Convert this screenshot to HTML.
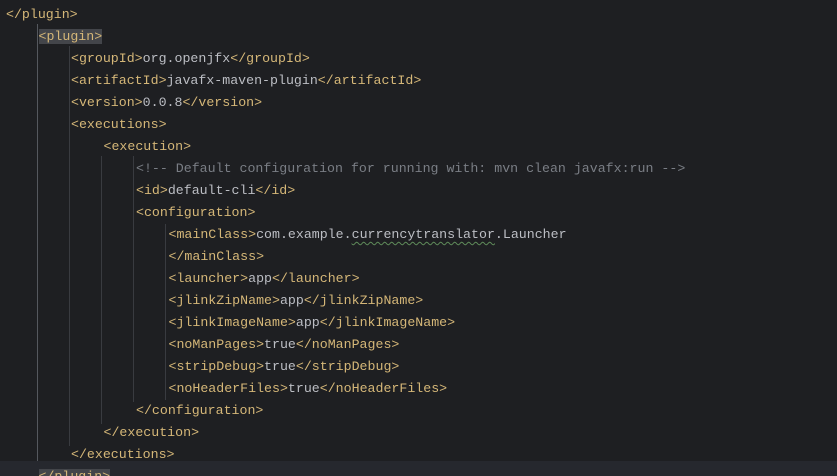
<!DOCTYPE html>
<html><head><style>
html,body{margin:0;width:837px;height:476px;overflow:hidden;}
body{background:#1e1f22;position:relative;font-family:"Liberation Mono",monospace;font-size:13.27px;}
.l{position:absolute;height:22px;line-height:22px;white-space:pre;color:#bcbec4;}
.t{color:#d5b778}
.c{color:#7a7e85}
.g{position:absolute;width:1px;background:#393b40}
.hl{background:#43454a}
.cur{position:absolute;left:0;top:461px;width:837px;height:15px;background:#26282e}
.w{text-decoration:underline wavy #5f8c5a;text-underline-offset:3px;text-decoration-thickness:1px}
</style></head><body>
<div class="cur"></div>
<div class="g" style="left:37px;top:24px;height:437px;background:#55585e"></div>
<div class="g" style="left:69px;top:46px;height:400px"></div>
<div class="g" style="left:101px;top:156px;height:268px"></div>
<div class="g" style="left:133px;top:156px;height:246px"></div>
<div class="g" style="left:165px;top:224px;height:176px"></div>
<div class="l" style="top:4px;left:6px"><span class="t">&lt;/plugin&gt;</span></div>
<div class="l" style="top:26px;left:38.5px"><span class="t hl">&lt;plugin&gt;</span></div>
<div class="l" style="top:48px;left:71px"><span class="t">&lt;groupId&gt;</span>org.openjfx<span class="t">&lt;/groupId&gt;</span></div>
<div class="l" style="top:70px;left:71px"><span class="t">&lt;artifactId&gt;</span>javafx-maven-plugin<span class="t">&lt;/artifactId&gt;</span></div>
<div class="l" style="top:92px;left:71px"><span class="t">&lt;version&gt;</span>0.0.8<span class="t">&lt;/version&gt;</span></div>
<div class="l" style="top:114px;left:71px"><span class="t">&lt;executions&gt;</span></div>
<div class="l" style="top:136px;left:103.5px"><span class="t">&lt;execution&gt;</span></div>
<div class="l" style="top:158px;left:136px"><span class="c">&lt;!-- Default configuration for running with: mvn clean javafx:run --&gt;</span></div>
<div class="l" style="top:180px;left:136px"><span class="t">&lt;id&gt;</span>default-cli<span class="t">&lt;/id&gt;</span></div>
<div class="l" style="top:202px;left:136px"><span class="t">&lt;configuration&gt;</span></div>
<div class="l" style="top:224px;left:168.5px"><span class="t">&lt;mainClass&gt;</span>com.example.<span class="w">currencytranslator</span>.Launcher</div>
<div class="l" style="top:246px;left:168.5px"><span class="t">&lt;/mainClass&gt;</span></div>
<div class="l" style="top:268px;left:168.5px"><span class="t">&lt;launcher&gt;</span>app<span class="t">&lt;/launcher&gt;</span></div>
<div class="l" style="top:290px;left:168.5px"><span class="t">&lt;jlinkZipName&gt;</span>app<span class="t">&lt;/jlinkZipName&gt;</span></div>
<div class="l" style="top:312px;left:168.5px"><span class="t">&lt;jlinkImageName&gt;</span>app<span class="t">&lt;/jlinkImageName&gt;</span></div>
<div class="l" style="top:334px;left:168.5px"><span class="t">&lt;noManPages&gt;</span>true<span class="t">&lt;/noManPages&gt;</span></div>
<div class="l" style="top:356px;left:168.5px"><span class="t">&lt;stripDebug&gt;</span>true<span class="t">&lt;/stripDebug&gt;</span></div>
<div class="l" style="top:378px;left:168.5px"><span class="t">&lt;noHeaderFiles&gt;</span>true<span class="t">&lt;/noHeaderFiles&gt;</span></div>
<div class="l" style="top:400px;left:136px"><span class="t">&lt;/configuration&gt;</span></div>
<div class="l" style="top:422px;left:103.5px"><span class="t">&lt;/execution&gt;</span></div>
<div class="l" style="top:444px;left:71px"><span class="t">&lt;/executions&gt;</span></div>
<div class="l" style="top:466px;left:38.5px"><span class="t hl">&lt;/plugin&gt;</span></div>
</body></html>
